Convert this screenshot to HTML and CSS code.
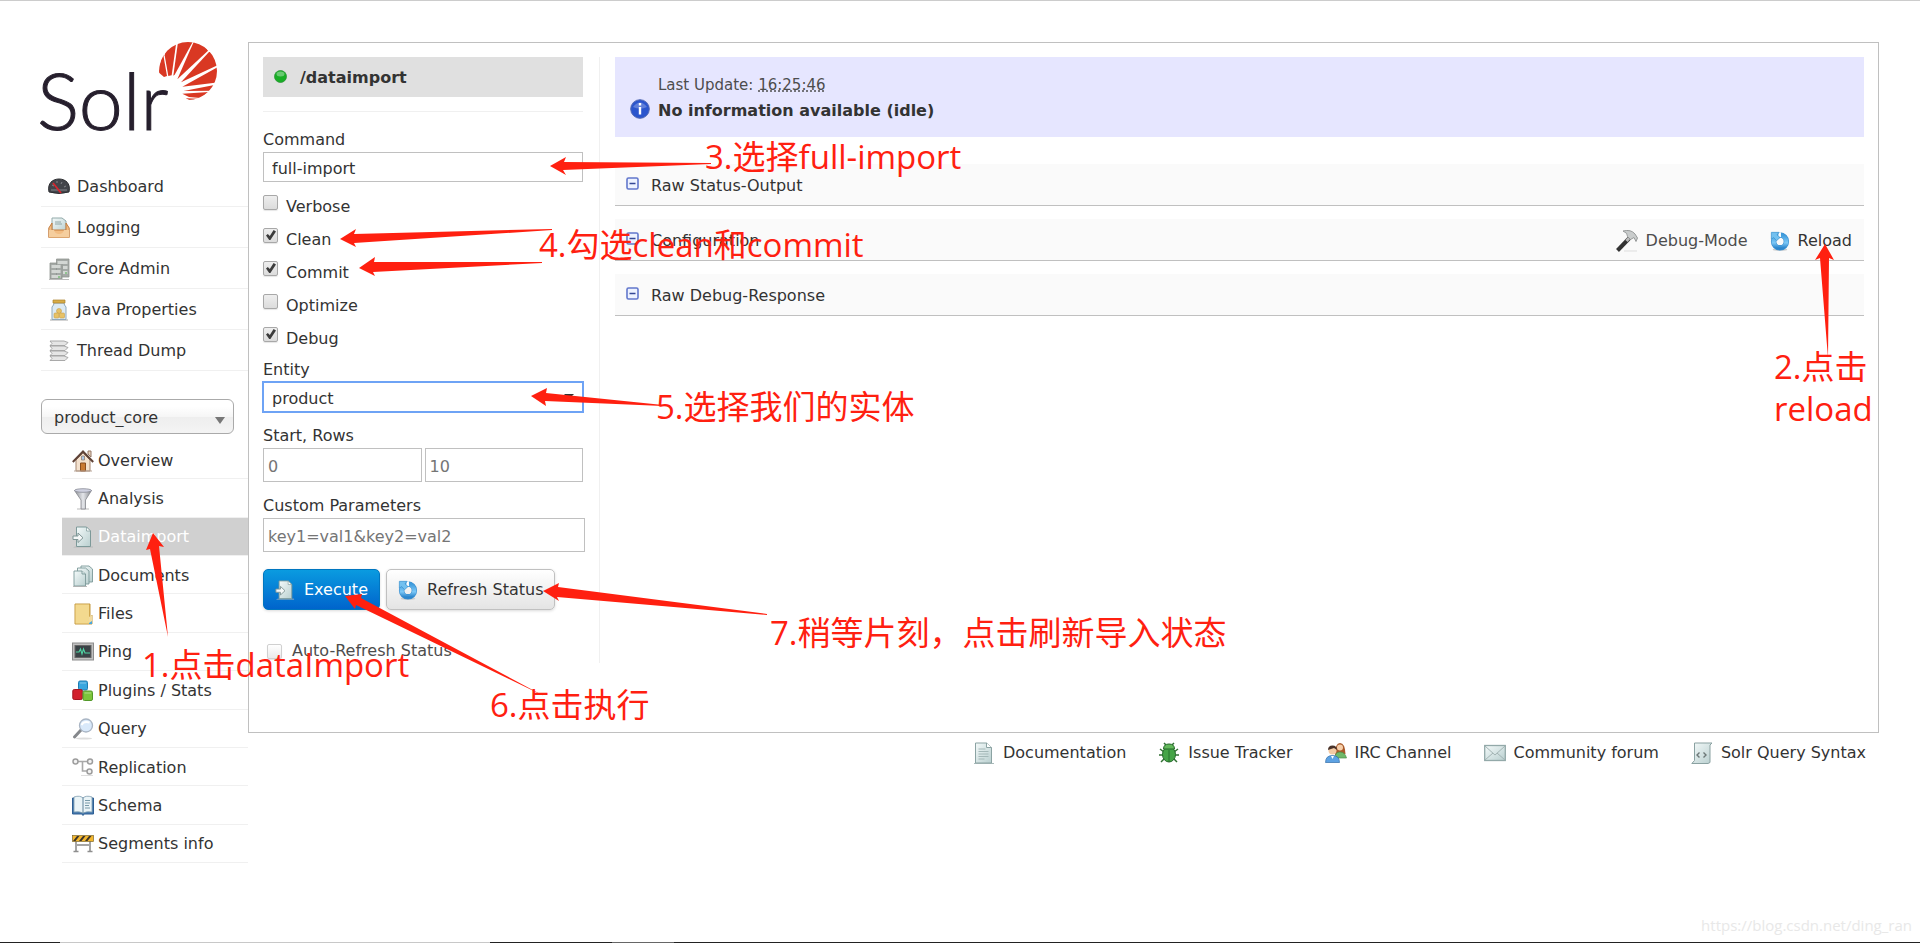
FILE: index.html
```html
<!DOCTYPE html>
<html lang="en">
<head>
    <meta charset="UTF-8">
    <meta name="viewport" content="width=device-width, initial-scale=1.0">
    <title>Solr Admin</title>
    <link rel="stylesheet" href="styles.css">
</head>
<body>
    <!-- icons used more than once -->
    <svg class="defs" width="0" height="0">
        <defs>
            <linearGradient id="paper" x1="0" y1="0" x2="1" y2="1"><stop offset="0" stop-color="#f4fafa"/><stop offset="1" stop-color="#b9cfcf"/></linearGradient>
            <linearGradient id="blue" x1="0" y1="0" x2="0" y2="1"><stop offset="0" stop-color="#3f9bdc"/><stop offset="0.6" stop-color="#7cc8f7"/><stop offset="1" stop-color="#2d86cc"/></linearGradient>
            <linearGradient id="steel" x1="0" y1="0" x2="1" y2="0"><stop offset="0" stop-color="#8a8d92"/><stop offset="0.5" stop-color="#e4e6ea"/><stop offset="1" stop-color="#84878c"/></linearGradient>
            <symbol id="icon-import" viewBox="0 0 22 22">
                <path d="M3 20.5h18v1H1z" fill="#b8b8b8"/>
                <path d="M4.500 1h10l4 4v15.500h-14z" fill="url(#paper)" stroke="#7d9999"/>
                <path d="M14.500 1v4h4z" fill="#fff" stroke="#7d9999" stroke-width="0.700"/>
                <path d="M1 10h5V7l5 4.800-5 4.700v-3H1z" fill="#f5f8f8" stroke="#809595"/>
            </symbol>
            <symbol id="icon-reload" viewBox="0 0 22 22">
                <ellipse cx="11" cy="20.500" rx="8" ry="1.200" fill="#ccc"/>
                <circle cx="11" cy="11.500" r="7" fill="none" stroke="#3a8fd0" stroke-width="6"/>
                <circle cx="11" cy="11.500" r="7" fill="none" stroke="url(#blue)" stroke-width="4.600"/>
                <path d="M9.500 1.500l2.500 0v5h-3z" fill="#fff"/>
                <path d="M1.500 1.500H10L7.700 4.200l3.300 3-3.800 3.500-3.200-3.500L1.500 9z" fill="#72c0ef" stroke="#3b93d0" stroke-width="0.800"/>
            </symbol>
            <symbol id="icon-minus" viewBox="0 0 14 14">
                <rect x="1" y="1" width="11" height="11" rx="1.500" fill="#edf2ff" stroke="#6277cc" stroke-width="1.600"/>
                <path d="M3.500 6.500h6" stroke="#334796" stroke-width="1.500"/>
            </symbol>
        </defs>
    </svg>

    <div class="wrapper">
        <aside class="sidebar">
            <a class="logo" href="#">
                <span class="logo-name">Solr</span>
                <svg class="logo-sun" viewBox="0 0 174 174">
                    <clipPath id="sun"><circle cx="87" cy="87" r="87"/></clipPath>
                    <g fill="#d93823" clip-path="url(#sun)">
                        <path d="M-5 90L12 34L24 102L15 105L0 92z"/>
                        <path d="M17 40L25 0L52 0L38 100L28 102z"/>
                        <path d="M57 0L99 -5L101 0L47 98L43 101z"/>
                        <path d="M104 0L130 0L147 26L55 112z"/>
                        <path d="M150 30L180 30L180 68L66 121z"/>
                        <path d="M180 73L180 121L70 134z"/>
                        <path d="M170 128L180 128L160 146L74 147z"/>
                        <path d="M70 155L150 150L124 168L90 165z"/>
                        <path d="M80 169L120 170L110 176L96 176z"/>
                    </g>
                </svg>
            </a>

            <ul class="menu">
                <li><a href="#"><svg class="icon" viewBox="0 0 22 22"><path d="M1 16C-1 7 5 3 11 3s12 4 10 13q-10 3-20 0z" fill="#43454a" stroke="#2c2d31"/><path d="M3 14h16M4 9l2 1M9 5v2M14 6l-1 2M18 10l-2 1" stroke="#85878c"/><path d="M5 7l8 10" stroke="#d7262f" stroke-width="1.800"/></svg>Dashboard</a></li>
                <li><a href="#"><svg class="icon" viewBox="0 0 22 22"><path d="M4 1h10l4 3v11H4z" fill="url(#paper)" stroke="#92aaaa"/><path d="M7 5h6M7 7h7" stroke="#90a6a6"/><path d="M.8 11L4 6v7h14V6l3.200 5v9.500H.8z" fill="#f2bd83" stroke="#c27d3e"/><path d="M1 13h5q1 4 5 4t5-4h5v7.500H1z" fill="#f5ce9e"/></svg>Logging</a></li>
                <li><a href="#"><svg class="icon" viewBox="0 0 22 22"><path d="M8.500 1H21v18H8.500zM2 5h12v16H2z" fill="#a4a9a6" stroke="#8f9491" stroke-width="0.800"/><path d="M9.500 3h10v3h-10zM15 8h4.500v3H15zM15 13h4.500v3H15zM3.500 7h9v3h-9zM3.500 12h9v3h-9zM3.500 17h9v3h-9z" fill="#d3d7d4"/><path d="M17 15h2M10 19h2" stroke="#4caf4a"/><path d="M1 21.500h20" stroke="#bbb"/></svg>Core Admin</a></li>
                <li><a href="#"><svg class="icon" viewBox="0 0 22 22"><path d="M2 21h18" stroke="#aaa"/><path d="M6 4h10q0 2 2 4v12.500H4V8q2-2 2-4z" fill="#dceaf4" stroke="#8fa9bd"/><path d="M5 1h12v3H5z" fill="#d8ad48" stroke="#ae812c" stroke-width="0.700"/><g fill="#e7c267" stroke="#c9a04c" stroke-width="0.600"><circle cx="11" cy="12" r="2.500"/><rect x="6" y="14" width="5" height="5" rx="1"/><rect x="11.500" y="14" width="5" height="5" rx="1"/></g></svg>Java Properties</a></li>
                <li><a href="#"><svg class="icon" viewBox="0 0 22 22"><g fill="#e5e5e5" stroke="#a0a0a0" stroke-width="0.900"><path d="M2 16h14l4 1.500L17 20.500H2l2-2z"/><path d="M2 11h14l4 1.500L17 15.500H2l2-2z"/><path d="M2 6h14l4 1.500L17 10.500H2l2-2z"/><path d="M2 1h14l4 1.500L17 5.500H2l2-2z"/></g></svg>Thread Dump</a></li>
            </ul>

            <div class="core-selector">
                <select aria-label="Core Selector"><option>product_core</option></select>
            </div>

            <ul class="menu submenu">
                <li><a href="#"><svg class="icon" viewBox="0 0 22 22"><path d="M4 10l7-7 7 7v11H4z" fill="#f4e2cf" stroke="#a58670"/><path d="M16 1h3v6l-3-3z" fill="#e8d3be" stroke="#947664"/><path d="M.8 12L11 1.500 21.200 12" fill="none" stroke="#5f4338" stroke-width="2"/><path d="M8.500 13h5v8h-5z" fill="#c97a32" stroke="#8a4d1e"/><path d="M9.500 6h3v4h-3z" fill="#a9c7e8" stroke="#8d7664" stroke-width="0.700"/><path d="M2 21h18" stroke="#b7a496"/></svg>Overview</a></li>
                <li><a href="#"><svg class="icon" viewBox="0 0 22 22"><path d="M5 21h12" stroke="#bbb"/><path d="M2.500 2.500L9 12v9h4.500v-9L19.500 2.500z" fill="url(#steel)" stroke="#85878d" stroke-width="0.800"/><ellipse cx="11" cy="2.500" rx="8.500" ry="1.800" fill="#cfd1e0" stroke="#888a96" stroke-width="0.800"/></svg>Analysis</a></li>
                <li class="active"><a href="#"><svg class="icon"><use href="#icon-import"/></svg>Dataimport</a></li>
                <li><a href="#"><svg class="icon" viewBox="0 0 22 22"><g fill="url(#paper)" stroke="#7c9898" stroke-width="0.900"><path d="M9 1h8l3.500 3v13H9z"/><path d="M5.500 3h8l3.500 3v13H5.500z"/><path d="M2 6h8l3.500 3v12H2z"/><path d="M10 6v3h3.500"/></g><path d="M1 21.500h14" stroke="#aaa" stroke-width="0.800"/></svg>Documents</a></li>
                <li><a href="#"><svg class="icon" viewBox="0 0 22 22"><path d="M3 1h15v13l2-2v9H3z" fill="#e0b55b" stroke="#c49a43"/><path d="M3.500 1.500h13.500v19H3.500z" fill="#f3d98f"/><path d="M17 17h3v4h-3z" fill="#4aa6dd"/><path d="M17 14l3-2v6l-3 2z" fill="#f1dba0"/></svg>Files</a></li>
                <li><a href="#"><svg class="icon" viewBox="0 0 22 22"><rect x="0.500" y="2" width="21" height="17" fill="#c1c1c1" stroke="#8d8d8d"/><rect x="3" y="4.500" width="16" height="12" fill="#3a4246" stroke="#666"/><path d="M4 11h3l1.500-3L10 13l1.500-5 1.500 4h5" fill="none" stroke="#4fd3a2" stroke-width="1.100"/></svg>Ping</a></li>
                <li><a href="#"><svg class="icon" viewBox="0 0 22 22"><rect x="6.500" y="1" width="9" height="9" rx="1.500" fill="#38a6df" stroke="#1f7cb2"/><rect x="0.800" y="9.500" width="9.500" height="10" rx="1.500" fill="#d2202c" stroke="#a31620"/><rect x="11" y="11" width="9.500" height="9.500" rx="1.500" fill="#7cc53b" stroke="#53982a"/><path d="M8 3h6M12.500 13H19" stroke="#fff" stroke-opacity="0.400"/></svg>Plugins / Stats</a></li>
                <li><a href="#"><svg class="icon" viewBox="0 0 22 22"><ellipse cx="12" cy="20.500" rx="8" ry="1" fill="#ddd"/><path d="M9 12l-6.500 7" stroke="#85888c" stroke-width="3" stroke-linecap="round"/><circle cx="14" cy="7.500" r="6.500" fill="#d9e9fa" stroke="#a9b5c4" stroke-width="1.300"/><path d="M9.500 7q2-4 8-2.500" stroke="#fff" stroke-width="2" fill="none"/></svg>Query</a></li>
                <li><a href="#"><svg class="icon" viewBox="0 0 22 22"><path d="M5 4.500h11M10.500 4.500V14h6" fill="none" stroke="#a9a9a9" stroke-width="1.600"/><g fill="#f3f3f3" stroke="#9d9d9d" stroke-width="1.500"><circle cx="3.500" cy="4.500" r="2.500"/><circle cx="18" cy="4.500" r="2.500"/><circle cx="17.500" cy="14.500" r="2.500"/></g><path d="M9 18.500h12" stroke="#ddd"/></svg>Replication</a></li>
                <li><a href="#"><svg class="icon" viewBox="0 0 22 22"><path d="M.5 3h21v16H12l-1 1.500L10 19H.5z" fill="#4478ae" stroke="#2e5f94"/><path d="M2 2q6-2 9 1v15q-4-2-9-1zM20 2q-6-2-9 1v15q4-2 9-1z" fill="#eaf4f7" stroke="#7d9cae" stroke-width="0.800"/><path d="M13 5.500h5M13 8h5M13 10.500h4M13 13h5" stroke="#789aa8"/></svg>Schema</a></li>
                <li><a href="#"><svg class="icon" viewBox="0 0 22 22"><path d="M4 8v10M18 8v10M4 12h14" stroke="#a5a5a5" stroke-width="2"/><path d="M1.500 18.500h5M15.500 18.500h5" stroke="#8e8e8e" stroke-width="1.500"/><rect x="0.500" y="2.500" width="21" height="6" fill="#f3b62d" stroke="#7e6830" stroke-width="0.700"/><path d="M1 8l4-5h2.500l-4 5zM7 8l4-5h2.500l-4 5zM13 8l4-5h2.500l-4 5z" fill="#3b342a"/></svg>Segments info</a></li>
            </ul>
        </aside>

        <div class="page">
            <main class="content">
                <form class="import-form">
                    <h2 class="handler">
                        <svg class="status" viewBox="0 0 13 13"><circle cx="6.500" cy="6.500" r="6" fill="#18ae25" stroke="#2c9337" stroke-width="0.800"/><ellipse cx="6.500" cy="4" rx="4" ry="2.500" fill="#fff" fill-opacity="0.350"/></svg>
                        /dataimport
                    </h2>
                    <div class="fields">
                        <label for="command">Command</label>
                        <select id="command"><option>full-import</option><option>delta-import</option></select>

                        <div class="checks">
                            <label><input type="checkbox" name="verbose">Verbose</label>
                            <label><input type="checkbox" name="clean" checked>Clean</label>
                            <label><input type="checkbox" name="commit" checked>Commit</label>
                            <label><input type="checkbox" name="optimize">Optimize</label>
                            <label><input type="checkbox" name="debug" checked>Debug</label>
                        </div>

                        <label for="entity">Entity</label>
                        <div class="entity">
                            <select id="entity"><option>product</option></select>
                        </div>

                        <label for="start">Start, Rows</label>
                        <div class="range">
                            <input type="text" id="start" placeholder="0">
                            <input type="text" id="rows" placeholder="10" aria-label="Rows">
                        </div>

                        <label for="custom">Custom Parameters</label>
                        <div class="custom">
                            <input type="text" id="custom" placeholder="key1=val1&amp;key2=val2">
                        </div>
                    </div>
                    <div class="buttons">
                        <button type="button" class="primary"><svg class="btn-icon"><use href="#icon-import"/></svg>Execute</button>
                        <button type="button"><svg class="btn-icon"><use href="#icon-reload"/></svg>Refresh Status</button>
                    </div>
                    <label class="auto"><input type="checkbox" name="auto">Auto-Refresh Status</label>
                </form>

                <section class="results">
                    <div class="message">
                        <span class="updated">Last Update: <abbr title="16:25:46">16:25:46</abbr></span>
                        <strong><svg class="info" viewBox="0 0 20 20"><circle cx="10" cy="10" r="9.300" fill="#2b55cd" stroke="#5269b3"/><path d="M3 8q7-9 14 0-7 3-14 0z" fill="#fff" fill-opacity="0.250"/><path d="M10 8v7.500M10 4v2.500" stroke="#fff" stroke-width="2.400"/></svg>No information available (idle)</strong>
                    </div>
                    <div class="block">
                        <a class="toggle" href="#"><svg class="minus"><use href="#icon-minus"/></svg>Raw Status-Output</a>
                    </div>
                    <div class="block">
                        <a class="toggle" href="#"><svg class="minus"><use href="#icon-minus"/></svg>Configuration</a>
                        <div class="actions">
                            <a class="muted" href="#"><svg class="icon" viewBox="0 0 22 22"><path d="M8 21h13" stroke="#ddd"/><path d="M13.500 8L1.500 20.500" stroke="#333" stroke-width="4"/><path d="M14.500 6.500l-4 4.500" stroke="#bbb" stroke-width="3"/><path d="M7 1q8-2 12 3l2.500 4-1.500 3.500-2-4-3.500 2-3-3Q12 3 7 1z" fill="#c9cccc" stroke="#8f9292" stroke-width="0.900"/></svg>Debug-Mode</a>
                            <a href="#"><svg class="btn-icon"><use href="#icon-reload"/></svg>Reload</a>
                        </div>
                    </div>
                    <div class="block">
                        <a class="toggle" href="#"><svg class="minus"><use href="#icon-minus"/></svg>Raw Debug-Response</a>
                    </div>
                </section>
            </main>

            <footer class="links">
                <a href="#"><svg class="icon" viewBox="0 0 22 22"><path d="M1 21.500h20" stroke="#aabbbb"/><path d="M2.500 1h11l5 4.500V21h-16z" fill="url(#paper)" stroke="#8ba3a3"/><path d="M13.500 1v4.500h5" fill="#fff" stroke="#8ba3a3"/><path d="M5.500 7h7M5.500 9.500h10M5.500 12h10M5.500 14.500h10M5.500 17h6" stroke="#a4b8b8"/></svg>Documentation</a>
                <a href="#"><svg class="icon" viewBox="0 0 22 22"><path d="M2 7l4 3M20 7l-4 3M1 13h20M3 20l4-4M19 20l-4-4M8 3L6 1M14 3l2-2" stroke="#306f32" stroke-width="1.500"/><ellipse cx="11" cy="12.500" rx="6.500" ry="7.500" fill="#45a447" stroke="#24692a"/><path d="M5.500 7q0-5 5.500-5t5.500 5z" fill="#63b95b" stroke="#24692a"/><path d="M11 8v12" stroke="#26722d"/></svg>Issue Tracker</a>
                <a href="#"><svg class="icon" viewBox="0 0 22 22"><path d="M10 13q0-12 5-12t5.500 11z" fill="#a95a2b"/><circle cx="15" cy="5.500" r="3" fill="#f6cfaa"/><path d="M10 16q0-6 5-6t6.500 6z" fill="#6eb869" stroke="#4b8f4b" stroke-width="0.700"/><circle cx="7.500" cy="8.500" r="4" fill="#f4cba4"/><path d="M3 8q0-4.500 4.500-4.500T12 8l-3-2z" fill="#49332a"/><path d="M.5 20.500q0-7 7-7t7 7z" fill="#5da2e3" stroke="#326da8" stroke-width="0.700"/><path d="M6 14l1.500 3L9 14z" fill="#fff"/></svg>IRC Channel</a>
                <a href="#"><svg class="icon" viewBox="0 0 22 22"><rect x="0.700" y="3.500" width="20.600" height="15" fill="url(#paper)" stroke="#93a9a9" stroke-width="1.300"/><path d="M1 18l8-7M21 18l-8-7M1 4l10 9L21 4" fill="none" stroke="#a3b4b4"/></svg>Community forum</a>
                <a href="#"><svg class="icon" viewBox="0 0 22 22"><path d="M3.500 1h17.500l-2 2v17.500L17 21.500H.8l2.700-3z" fill="url(#paper)" stroke="#8aa1a1"/><path d="M8.500 10.500L6 13l2.500 2.500M12.500 10.500L15 13l-2.500 2.500" fill="none" stroke="#6c7777" stroke-width="1.400"/></svg>Solr Query Syntax</a>
            </footer>
        </div>
    </div>

    <!-- tutorial notes laid over the page -->
    <div class="notes">
        <svg class="arrows" width="1920" height="943" fill="#ff2010">
            <path d="M153 533L146 550L150 549L168 637L159 546L164 547z"/>
            <path d="M1825 244L1815 260L1820 258L1828 358L1829 258L1834 260z"/>
            <path d="M550 166L566 157L564 162L711 163L711 164L563 170L566 175z"/>
            <path d="M340 239L356 229L354 234L552 229L552 230L354 243L356 247z"/>
            <path d="M359 268L375 257L374 262L542 262L542 263L373 272L375 276z"/>
            <path d="M531 396L547 388L546 393L663 405L663 406L545 401L546 406z"/>
            <path d="M345 596L362 594L361 598L544 696L356 605L355 609z"/>
            <path d="M543 591L559 583L558 587L767 614L767 615L557 597L559 601z"/>
        </svg>
        <p class="note note-1">1.点击dataImport</p>
        <p class="note note-2">2.点击<br>reload</p>
        <p class="note note-3">3.选择full-import</p>
        <p class="note note-4">4.勾选clean和commit</p>
        <p class="note note-5">5.选择我们的实体</p>
        <p class="note note-6">6.点击执行</p>
        <p class="note note-7">7.稍等片刻，点击刷新导入状态</p>
        <p class="watermark">https://blog.csdn.net/ding_ran</p>
        <div class="taskbar"></div>
    </div>
</body>
</html>
```
FILE: styles.css
```css
* {
    box-sizing: border-box;
}
body {
    position: relative;
    min-height: 100vh;
    margin: 0;
    border-top: 1px solid #ccc;
    background-color: #fff;
    color: #333;
    font-family: "DejaVu Sans", Verdana, sans-serif;
    font-size: 16px;
    line-height: 24px;
    overflow-x: hidden;
}
a {
    color: #333;
    text-decoration: none;
}
input, select, button {
    font-family: inherit;
    font-size: inherit;
    color: #333;
}
.defs {
    position: absolute;
}
.icon {
    flex: none;
    width: 22px;
    height: 22px;
}
.btn-icon {
    flex: none;
    width: 20px;
    height: 20px;
}
.wrapper {
    display: flex;
    align-items: flex-start;
    padding: 41px 41px 0;
}

/* sidebar */
.sidebar {
    flex: none;
    width: 207px;
}
.logo {
    position: relative;
    display: block;
    height: 124px;
    margin-left: -4px;
    padding-top: 18px;
}
.logo-name {
    color: #261f2d;
    font-family: Lato, sans-serif;
    font-size: 79px;
    font-weight: 300;
    line-height: 80px;
    -webkit-text-stroke: 1px #261f2d;
}
.logo-sun {
    position: absolute;
    left: 122px;
    top: 0;
    width: 58px;
    height: 58px;
}
.menu {
    margin: 0;
    padding: 0;
    list-style: none;
}
.menu li {
    border-bottom: 1px solid #f0f0f0;
}
.menu a {
    display: flex;
    align-items: center;
    gap: 7px;
    height: 40px;
    padding: 2px 0 0 7px;
}
.core-selector {
    position: relative;
    width: 193px;
    margin: 28px 0 7px;
}
.core-selector select {
    width: 100%;
    height: 35px;
    padding: 2px 12px 0;
    appearance: none;
    border: 1px solid #aaa;
    border-radius: 6px;
    background: linear-gradient(#fff 20%, #f6f6f6 50%, #eee 52%, #f4f4f4 100%);
}
.core-selector::after {
    content: "";
    position: absolute;
    right: 9px;
    top: 18px;
    border: 5px solid transparent;
    border-top: 7px solid #777;
    border-bottom: 0;
}
.submenu {
    display: grid;
    grid-auto-rows: 1fr;
    min-height: 422px;
    margin-left: 21px;
}
.submenu a {
    gap: 4px;
    height: 100%;
    padding-left: 10px;
}
.submenu .active {
    background-color: #d0d0d0;
}
.submenu .active a {
    color: #fff;
}

/* main box */
.page {
    flex: 1;
    min-width: 0;
}
.content {
    display: flex;
    align-items: flex-start;
    gap: 15px;
    padding: 14px 14px 69px;
    border: 1px solid #c0c0c0;
    background-color: #fff;
}
.import-form {
    flex: none;
    width: 337px;
    padding-right: 16px;
    border-right: 1px solid #f0f0f0;
}
.handler {
    display: flex;
    align-items: center;
    gap: 13px;
    height: 40px;
    margin: 0 0 14px;
    padding: 2px 0 0 11px;
    background-color: #e0e0e0;
    font-size: 16px;
}
.status {
    width: 13px;
    height: 13px;
    margin-bottom: 4px;
}
.fields {
    padding-top: 16px;
    border-top: 1px solid #f0f0f0;
}
.fields label {
    display: block;
}
.fields select {
    display: block;
    width: 100%;
    height: 30px;
    padding: 2px 8px 0;
    appearance: none;
    border: 1px solid #c0c0c0;
    background-color: #fff;
}
.fields input[type="text"] {
    width: 100%;
    height: 34px;
    padding: 2px 4px 0;
    border: 1px solid #c0c0c0;
    background-color: #fff;
}
.fields input::placeholder {
    color: #757575;
}
input[type="checkbox"] {
    position: relative;
    width: 15px;
    height: 15px;
    margin: 0 8px 8px 0;
    appearance: none;
    border: 1px solid #a8a8a8;
    border-radius: 2px;
    background: linear-gradient(#eee, #dcdcdc);
    box-shadow: 0 1px 1px rgba(0, 0, 0, 0.1);
}
input[type="checkbox"]:checked::after {
    content: "";
    position: absolute;
    left: 2px;
    top: 1px;
    width: 10px;
    height: 10px;
    background-color: #3c3c3c;
    clip-path: polygon(0 54%, 18% 40%, 38% 60%, 76% 0, 100% 14%, 44% 100%, 32% 100%);
}
.checks {
    margin: 8px 0 3px;
}
.checks label {
    display: flex;
    align-items: center;
    height: 33px;
}
.entity {
    position: relative;
    margin-bottom: 12px;
}
.fields .entity select {
    border-color: #6ea3f5;
    outline: 1px solid #6ea3f5;
}
.entity::after {
    content: "";
    position: absolute;
    right: 9px;
    top: 12px;
    border: 5px solid transparent;
    border-top-color: #333;
    border-bottom: 0;
}
.range {
    display: flex;
    gap: 3px;
    margin-bottom: 12px;
}
.custom {
    display: flex;
    margin-right: -2px;
}
.buttons {
    display: flex;
    gap: 6px;
    margin: 17px 0 29px;
}
.buttons button {
    display: flex;
    align-items: center;
    gap: 9px;
    height: 41px;
    padding: 0 11px;
    border: 1px solid #c0c0c0;
    border-radius: 5px;
    background: linear-gradient(#fff, #e4e4e4);
    box-shadow: 0 1px 3px rgba(0, 0, 0, 0.15);
    white-space: nowrap;
}
.buttons .primary {
    border-color: #0076c0;
    background: linear-gradient(#0a9be0, #0064cc);
    color: #fff;
}
.auto {
    display: flex;
    align-items: center;
    padding-left: 4px;
    color: #4d4d4d;
}
.auto input[type="checkbox"] {
    margin: 0 10px 0 0;
    border-color: #d0d0d0;
    background: linear-gradient(#fff, #eaeaea);
}

/* results */
.results {
    flex: 1;
    min-width: 0;
}
.message {
    height: 80px;
    margin-bottom: 27px;
    padding: 15px 15px 0;
    background-color: #e6e6ff;
    line-height: 26px;
}
.updated {
    display: block;
    padding-left: 28px;
    color: #4d4d4d;
    font-size: 15px;
}
.message strong {
    display: flex;
    align-items: center;
    gap: 8px;
}
.info {
    width: 20px;
    height: 20px;
    margin-bottom: 4px;
}
.block {
    display: flex;
    align-items: center;
    justify-content: space-between;
    height: 42px;
    margin-bottom: 13px;
    padding: 2px 12px 0 11px;
    border-bottom: 1px solid #c0c0c0;
    background-color: #fafafa;
}
.toggle {
    display: flex;
    align-items: center;
    gap: 11px;
}
.minus {
    width: 14px;
    height: 14px;
    margin-bottom: 4px;
}
.actions {
    display: flex;
    gap: 22px;
}
.actions a, .links a {
    display: flex;
    align-items: center;
    gap: 8px;
}
.actions .muted {
    color: #4d4d4d;
}
.links {
    display: flex;
    justify-content: flex-end;
    gap: 32px;
    padding: 8px 13px 0 0;
}

/* notes */
.notes {
    position: absolute;
    left: 0;
    top: -1px;
    width: 100%;
    height: 100vh;
    pointer-events: none;
}
.arrows {
    position: absolute;
    left: 0;
    top: 0;
}
.note {
    position: absolute;
    margin: 0;
    color: #ff2010;
    font-family: "Open Sans", "Noto Sans CJK SC", sans-serif;
    font-size: 33px;
    line-height: 42px;
    white-space: nowrap;
}
.note-1 {
    left: 142px;
    top: 644px;
}
.note-2 {
    left: 1774px;
    top: 346px;
}
.note-3 {
    left: 705px;
    top: 136px;
}
.note-4 {
    left: 539px;
    top: 224px;
}
.note-5 {
    left: 656px;
    top: 386px;
}
.note-6 {
    left: 490px;
    top: 684px;
}
.note-7 {
    left: 770px;
    top: 612px;
}
.watermark {
    position: absolute;
    right: 8px;
    bottom: 6px;
    margin: 0;
    color: #e8e8e8;
    font-family: "Open Sans", sans-serif;
    font-size: 15px;
}
.taskbar {
    position: absolute;
    left: 0;
    bottom: 0;
    width: 100%;
    height: 1px;
    background: linear-gradient(to right, #222 60px, #c8c8c8 60px 490px, #222 490px 612px, #666 612px 674px, #222 674px);
}
```
